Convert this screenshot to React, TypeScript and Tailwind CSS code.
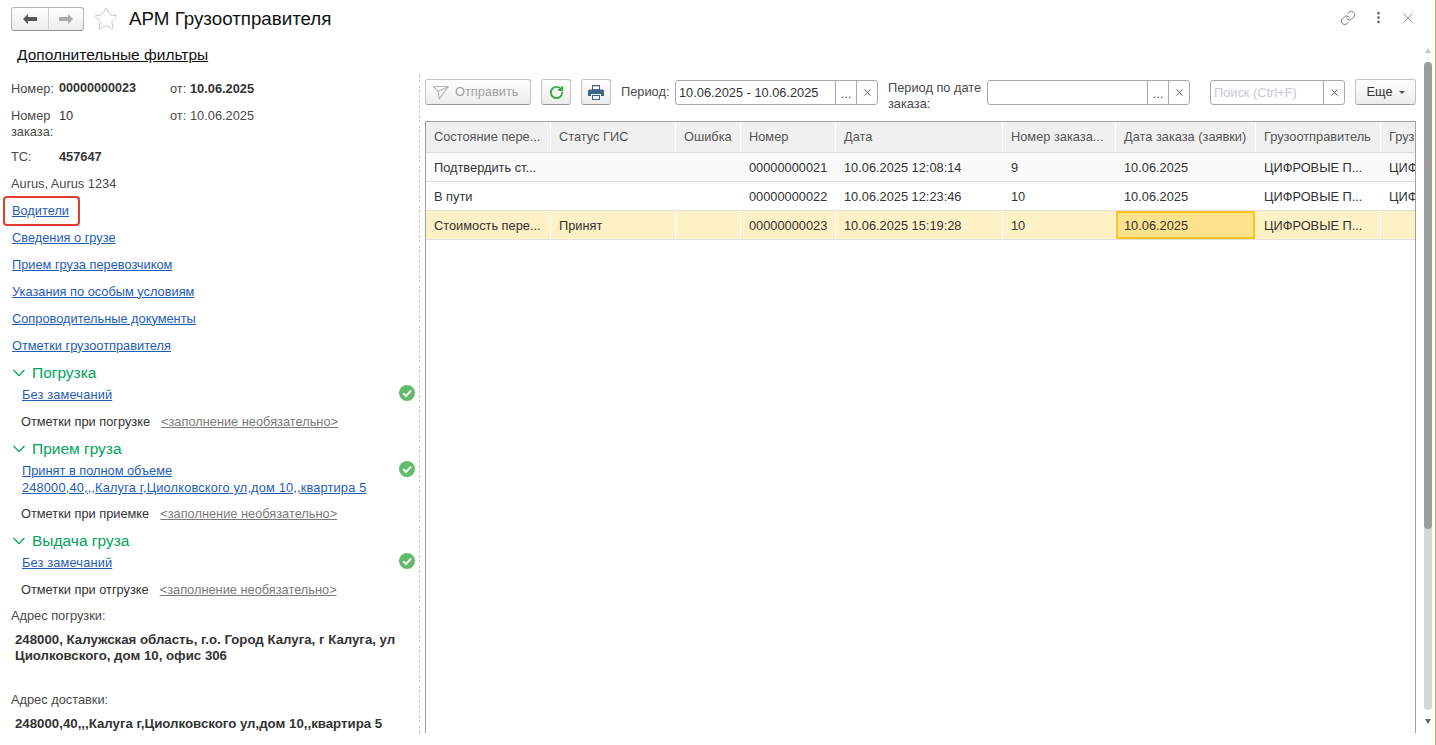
import { Link, MoreVertical, RotateCw, Star, X } from 'lucide-react'

const columns = [
  { title: 'Состояние пере...', width: 'w-[125px]' },
  { title: 'Статус ГИС', width: 'w-[125px]' },
  { title: 'Ошибка', width: 'w-[65px]' },
  { title: 'Номер', width: 'w-[95px]' },
  { title: 'Дата', width: 'w-[167px]' },
  { title: 'Номер заказа...', width: 'w-[113px]' },
  { title: 'Дата заказа (заявки)', width: 'w-[140px]' },
  { title: 'Грузоотправитель', width: 'w-[125px]' },
  { title: 'Груз', width: 'w-[35px]' },
]

const rows = [
  ['Подтвердить ст...', '', '', '00000000021', '10.06.2025 12:08:14', '9', '10.06.2025', 'ЦИФРОВЫЕ П...', 'ЦИФ'],
  ['В пути', '', '', '00000000022', '10.06.2025 12:23:46', '10', '10.06.2025', 'ЦИФРОВЫЕ П...', 'ЦИФ'],
  ['Стоимость пере...', 'Принят', '', '00000000023', '10.06.2025 15:19:28', '10', '10.06.2025', 'ЦИФРОВЫЕ П...', ''],
]

const links = ['Сведения о грузе', 'Прием груза перевозчиком', 'Указания по особым условиям', 'Сопроводительные документы', 'Отметки грузоотправителя']

function CheckBadge({ className }: { className?: string }) {
  return (
    <svg width="16" height="16" viewBox="0 0 16 16" className={`shrink-0 ${className ?? ''}`}>
      <circle cx="8" cy="8" r="8" fill="#62bb6a" />
      <path d="M4.2 8.2 7 11l5-5.4" fill="none" stroke="#fff" strokeWidth="2" />
    </svg>
  )
}

function SectionTitle({ title, h }: { title: string; h: string }) {
  return (
    <div className={`flex items-center pl-[13px] ${h}`}>
      <svg width="12" height="8" viewBox="0 0 12 8" fill="none" stroke="#00a35c" strokeWidth="1.3">
        <path d="M.6 1 6 6.6 11.4 1" />
      </svg>
      <span className="ml-[7px] text-[15.5px] text-[#00a35c]">{title}</span>
    </div>
  )
}

function Notes({ label, gap }: { label: string; gap: string }) {
  return (
    <div className="flex h-[24px] items-center pl-[21px] text-[#333]">
      <span>{label}</span>
      <span className={`${gap} text-[#7a7a7a] underline`}>&lt;заполнение необязательно&gt;</span>
    </div>
  )
}

function FieldInput({ value, width, hasDots, placeholder }: { value?: string; width: string; hasDots?: boolean; placeholder?: string }) {
  return (
    <div className={`mt-[1px] flex h-[25px] ${width} rounded-[3px] border border-[#a8a8a8] bg-white`}>
      <div className={`flex-1 truncate px-[3px] leading-[24px] ${placeholder ? 'text-[#c8c8d0]' : 'text-[#333]'}`}>{value || placeholder}</div>
      {hasDots && <div className="w-[21px] border-l border-[#a8a8a8] text-center leading-[25px] text-[#555]">...</div>}
      <div className="flex w-[21px] items-center justify-center border-l border-[#a8a8a8]">
        <X size={11} strokeWidth={2} className="text-[#555]" />
      </div>
    </div>
  )
}

const buttonClass = 'flex h-[26px] items-center justify-center rounded-[3px] border border-[#c4c4c4] border-b-[#9c9c9c] bg-gradient-to-b from-white to-[#ececec]'

export default function App() {
  return (
    <div className="flex h-[745px] w-[1436px] overflow-hidden bg-white font-['Liberation_Sans',Arial,sans-serif] text-[12.8px] text-[#4a4a4a]">
      <div className="w-[1424px] shrink-0">
        {/* шапка формы */}
        <div className="flex h-[38px] items-center pl-[11px]">
          <div className="flex h-[24px] w-[73px] rounded-[3px] border border-[#b5b5b5] border-b-[#999] bg-gradient-to-b from-white to-[#ececec]">
            <div className="flex w-[37px] items-center justify-center border-r border-[#d0d0d0]">
              <svg width="14" height="10" viewBox="0 0 14 10"><path d="M0 5 5 0v3h9v4H5v3z" fill="#555" /></svg>
            </div>
            <div className="flex flex-1 items-center justify-center">
              <svg width="14" height="10" viewBox="0 0 14 10"><path d="M14 5 9 0v3H0v4h9v3z" fill="#aaa" /></svg>
            </div>
          </div>
          <Star size={26} strokeWidth={0.9} className="ml-[9px] text-[#c4c4c4]" />
          <h1 className="ml-[10px] text-[18.75px] leading-none text-[#111]">АРМ Грузоотправителя</h1>
          <div className="-mt-[3px] ml-auto flex items-center pr-[8px] text-[#666]">
            <Link size={16} strokeWidth={1.3} />
            <MoreVertical size={15} strokeWidth={2.4} className="ml-[15px]" />
            <X size={16} strokeWidth={1} className="ml-[14px]" />
          </div>
        </div>
        <div className="flex h-[37px] items-start pl-[17px] pt-[8px]">
          <span className="text-[15.5px] leading-[18px] text-[#111] underline">Дополнительные фильтры</span>
        </div>

        <div className="flex h-[658px]">
          {/* левая панель */}
          <div className="h-[658px] w-[420px] shrink-0 border-r border-dashed border-[#c8c8c8] pr-[4px]">
            <div className="flex h-[27px] items-center pl-[11px]">
              <span className="w-[48px]">Номер:</span>
              <b className="w-[111px] text-[12.6px] text-[#333]">00000000023</b>
              <span className="w-[20px]">от:</span>
              <b className="text-[#333]">10.06.2025</b>
            </div>
            <div className="flex h-[41px] pl-[11px] pt-[6px] leading-[16px]">
              <span className="w-[48px]">Номер заказа:</span>
              <span className="w-[111px] text-[#333]">10</span>
              <span className="w-[20px]">от:</span>
              <span>10.06.2025</span>
            </div>
            <div className="flex h-[27px] items-center pl-[11px]">
              <span className="w-[48px]">ТС:</span>
              <b className="text-[#333]">457647</b>
            </div>
            <div className="flex h-[27px] items-center pl-[11px]">Aurus, Aurus 1234</div>
            <div className="relative flex h-[27px] items-center pl-[12px]">
              <span className="text-[#1f5cb8] underline">Водители</span>
              <span className="absolute left-[3px] top-[-1px] h-[30px] w-[77px] rounded-[4px] border-[2.5px] border-[#e8392d]" />
            </div>
            {links.map((link) => (
              <div key={link} className="flex h-[27px] items-center pl-[12px]">
                <span className="text-[#1f5cb8] underline">{link}</span>
              </div>
            ))}

            <SectionTitle title="Погрузка" h="h-[24px] mt-[2px]" />
            <div className="-mt-[1px] flex h-[22px] items-center justify-between pl-[22px]">
              <span className="tracking-[0.15px] text-[#1f5cb8] underline">Без замечаний</span>
              <CheckBadge className="-mt-[4px]" />
            </div>
            <div className="mt-[4px]"><Notes label="Отметки при погрузке" gap="ml-[11px]" /></div>

            <SectionTitle title="Прием груза" h="h-[24px] mt-[3px]" />
            <div className="flex h-[34px] items-start justify-between pl-[22px] leading-[17px]">
              <span className="mt-[1px] text-[#1f5cb8] underline">
                Принят в полном объеме
                <br />
                <span className="tracking-[0.16px]">248000,40,,,Калуга г,Циолковского ул,дом 10,,квартира 5</span>
              </span>
              <CheckBadge />
            </div>
            <div className="mt-[7px]"><Notes label="Отметки при приемке" gap="ml-[11px]" /></div>

            <SectionTitle title="Выдача груза" h="h-[24px] mt-[3px]" />
            <div className="-mt-[1px] flex h-[22px] items-center justify-between pl-[22px]">
              <span className="tracking-[0.15px] text-[#1f5cb8] underline">Без замечаний</span>
              <CheckBadge className="-mt-[4px]" />
            </div>
            <div className="mt-[4px]"><Notes label="Отметки при отгрузке" gap="ml-[11px]" /></div>

            <div className="mt-[6px] pl-[11px] leading-[16px]">Адрес погрузки:</div>
            <div className="mt-[8px] pl-[15px] pr-[8px] text-[13.25px] font-bold leading-[16px] text-[#333]">
              248000, Калужская область, г.о. Город Калуга, г Калуга, ул Циолковского, дом 10, офис 306
            </div>
            <div className="mt-[28px] pl-[11px] leading-[16px]">Адрес доставки:</div>
            <div className="mt-[8px] pl-[15px] text-[13.25px] font-bold leading-[16px] text-[#333]">
              248000,40,,,Калуга г,Циолковского ул,дом 10,,квартира 5
            </div>
          </div>

          {/* правая панель */}
          <div className="ml-[5px] w-[991px] shrink-0">
            <div className="flex h-[46px] items-start pt-[4px]">
              <div className={`${buttonClass} w-[106px] !justify-start pl-[7px] text-[#a0a0a0]`}>
                <svg width="16" height="15" viewBox="0 0 16 15" fill="none" stroke="#b4b4b4" strokeWidth="1.1">
                  <path d="M.6 1.5h14.8L6.4 13.8 5 6.5zM5 6.5l10.4-5" />
                </svg>
                <span className="ml-[6px]">Отправить</span>
              </div>
              <div className={`${buttonClass} ml-[10px] w-[30px]`}>
                <RotateCw size={15} strokeWidth={3} className="text-[#3fa73f]" />
              </div>
              <div className={`${buttonClass} ml-[10px] w-[30px]`}>
                <svg width="16" height="15" viewBox="0 0 16 15">
                  <path d="M4 0h8v5H4z M5 1.2v3h6v-3z" fill="#3f6287" fillRule="evenodd" />
                  <path d="M1.5 4.5h13A1.5 1.5 0 0 1 16 6v5h-3V9H3v2H0V6a1.5 1.5 0 0 1 1.5-1.5z" fill="#3f6287" />
                  <path d="M4 10h8v5H4z M5 11v3h6v-3z" fill="#3f6287" fillRule="evenodd" />
                </svg>
              </div>
              <span className="ml-[10px] mt-[5px] w-[54px] leading-[16px]">Период:</span>
              <FieldInput value="10.06.2025 - 10.06.2025" width="w-[203px]" hasDots />
              <span className="ml-[10px] mt-[1px] w-[99px] leading-[16px]">Период по дате заказа:</span>
              <FieldInput width="w-[203px]" hasDots />
              <div className="ml-[20px]"><FieldInput placeholder="Поиск (Ctrl+F)" width="w-[135px]" /></div>
              <div className={`${buttonClass} ml-[10px] w-[61px] text-[#333]`}>
                Еще
                <span className="ml-[6px] mt-[1px] border-x-[3px] border-t-[3px] border-x-transparent border-t-[#555]" />
              </div>
            </div>

            <div className="h-[612px] overflow-hidden border-x border-t border-[#a0a0a0]">
              <div className="flex h-[31px] border-b border-[#dcdcdc] bg-[#f0f0f0]">
                {columns.map((col) => (
                  <div key={col.title} className={`${col.width} shrink-0 overflow-hidden whitespace-nowrap border-r border-white pl-[8px] leading-[30px] text-[#555]`}>
                    {col.title}
                  </div>
                ))}
              </div>
              {rows.map((row, r) => (
                <div key={r} className={`flex h-[29px] border-b border-[#e2e2e2] ${r === 0 ? 'bg-[#fafafa]' : r === 2 ? 'bg-[#fdf1c5]' : 'bg-white'}`}>
                  {row.map((cell, c) => (
                    <div
                      key={c}
                      className={`shrink-0 overflow-hidden whitespace-nowrap text-[#333] ${
                        r === 2 && c === 6
                          ? 'mr-[1px] w-[139px] border-2 border-[#fbc51a] bg-[#fee28c] pl-[6px] leading-[26px]'
                          : r === 2
                            ? `${columns[c].width} border-r border-white pl-[8px] leading-[30px]`
                            : `${columns[c].width} pl-[8px] leading-[30px]`
                      }`}
                    >
                      {cell}
                    </div>
                  ))}
                </div>
              ))}
            </div>
          </div>
        </div>
      </div>

      {/* полоса прокрутки */}
      <div className="flex w-[12px] shrink-0 flex-col border-r border-[#b9b96e] pl-0">
        <div className="flex w-[8px] justify-center pt-[48px]">
          <span className="border-x-[3px] border-b-[5px] border-x-transparent border-b-[#c8c8c8]" />
        </div>
        <div className="mt-[9px] h-[648px] w-[8px] overflow-hidden rounded-full bg-[#d6d6d6]">
          <div className="h-[467px] rounded-b-full bg-[#9d9d9d]" />
        </div>
        <div className="flex w-[8px] justify-center pt-[9px]">
          <span className="border-x-[3px] border-t-[5px] border-x-transparent border-t-[#666]" />
        </div>
      </div>
    </div>
  )
}
